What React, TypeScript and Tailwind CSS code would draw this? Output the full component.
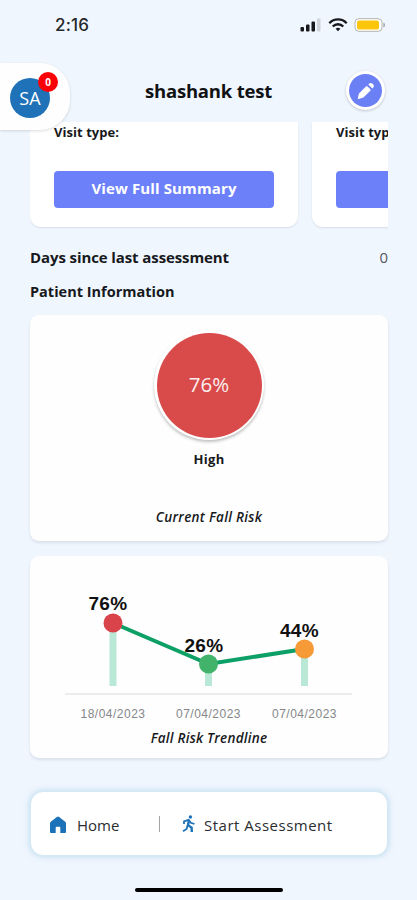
const points = [
  { date: "18/04/2023", label: "76%", x: 113, y: 623, lx: 108, ly: 610, color: "#d9434a" },
  { date: "07/04/2023", label: "26%", x: 208.5, y: 664, lx: 204, ly: 652, color: "#41b36b" },
  { date: "07/04/2023", label: "44%", x: 304.5, y: 649, lx: 299.5, ly: 636.5, color: "#f59a36" },
];

function StatusBar() {
  return (
    <div className="h-[50px] pt-[2px] pl-[55px] pr-[31px] flex items-center justify-between">
      <span className="font-['Inter'] font-medium text-[17px] tracking-[0.2px] text-[#25282c]">2:16</span>
      <div className="flex items-center -mt-[2px]">
        <svg width="22" height="14" viewBox="0 0 22 14" className="mr-[6px]">
          <rect x="0.5" y="9" width="3.5" height="4.5" rx="1" fill="#17191c" />
          <rect x="6" y="6.5" width="3.5" height="7" rx="1" fill="#17191c" />
          <rect x="11.5" y="3.5" width="3.5" height="10" rx="1" fill="#17191c" />
          <rect x="17" y="0.5" width="3.5" height="13" rx="1" fill="#cfd4da" />
        </svg>
        <svg width="20" height="14" viewBox="0 0 20 14" className="mr-[6px]" fill="none" stroke="#17191c" strokeWidth="2.3">
          <path d="M1.3 5.2C6.1 0.2 13.9 0.2 18.7 5.2" />
          <path d="M4.7 8.5C7.7 5.5 12.3 5.5 15.3 8.5" />
          <path d="M7.6 10.7C9 9.5 11 9.5 12.4 10.7L10 13.2Z" fill="#17191c" stroke="none" />
        </svg>
        <svg width="32" height="14" viewBox="0 0 32 14">
          <rect x="1" y="0.7" width="27" height="12.6" rx="3.8" fill="#fff" stroke="#b3b3ae" strokeWidth="1" />
          <rect x="3" y="2.4" width="22" height="9.2" rx="2.2" fill="#fdc50b" />
          <path d="M29.5 4.5C31.3 5.2 31.3 8.8 29.5 9.5Z" fill="#8f9296" />
        </svg>
      </div>
    </div>
  );
}

function Header() {
  return (
    <header className="relative h-[72px] flex items-center justify-center">
      <div className="absolute z-10 left-0 top-[13px] w-[70px] h-[67px] bg-[#fefefe] rounded-r-[30px] shadow-[0_1px_3px_rgba(0,0,0,0.14)]">
        <div className="absolute left-[10px] top-[15px] size-10 rounded-full bg-[#1f72b8] flex items-center justify-center text-white text-[18px]">
          SA
        </div>
        <div className="absolute left-[38px] top-[9px] size-5 rounded-full bg-[#fb0007] flex items-center justify-center text-white font-bold text-[10px]">
          0
        </div>
      </div>
      <h1 className="mt-[10px] font-bold text-[18.5px] tracking-[-0.2px] text-[#101214]">shashank test</h1>
      <button className="absolute left-[346px] top-[21px] size-[39px] rounded-full bg-white shadow-[0_1px_3px_rgba(0,0,0,0.2)] flex items-center justify-center">
        <span className="size-[33px] rounded-full bg-[#6c80f5] flex items-center justify-center">
          <svg width="20" height="20" viewBox="0 0 20 20" fill="#fff">
            <path d="M1.8 17L3 12.4L9.9 5.5Q10.8 4.8 11.6 5.5L14.3 8.2Q15 9 14.3 9.8L7.4 16.6L2.7 17.9Q1.6 18.1 1.8 17Z" />
            <path d="M12.3 3.6L13.3 2.6Q14.9 1.3 16.3 2.6L17.3 3.6Q18.6 5 17.3 6.6L16.3 7.6Z" />
          </svg>
        </span>
      </button>
    </header>
  );
}

function VisitCard({ action }: { action?: string }) {
  return (
    <div className="w-[268px] h-[105px] shrink-0 bg-white rounded-b-[11px] px-6 shadow-[0_1px_2px_rgba(0,0,0,0.1)]">
      <p className="h-[49px] pt-[1px] text-[13px] leading-[18px] tracking-[0.05px] font-bold">Visit type:</p>
      <button className="w-[220px] h-[37px] pb-[2px] rounded-[4px] bg-[#6c80fa] text-white font-bold text-[15px] tracking-[0.12px]">
        {action}
      </button>
    </div>
  );
}

function RiskCard() {
  return (
    <section className="mt-[11px] h-[226px] bg-[#fefefe] rounded-[9px] shadow-[0_2px_3px_rgba(60,70,90,0.12)] flex flex-col items-center pt-[15px]">
      <div className="size-[110px] rounded-full bg-white shadow-[0_2px_3px_rgba(0,0,0,0.24)] flex items-center justify-center">
        <div className="size-[105px] pb-[2px] rounded-full bg-[#d94b4b] text-[#fbeeee] text-[20.5px] flex items-center justify-center">
          76%
        </div>
      </div>
      <p className="mt-[9px] text-[13px] leading-[20px] tracking-[0.3px] font-bold">High</p>
      <p className="mt-[38px] text-[13.5px] leading-[20px] tracking-[0.3px] font-semibold italic">Current Fall Risk</p>
    </section>
  );
}

function TrendCard() {
  return (
    <section className="mt-[15px] h-[202px] bg-[#fefefe] rounded-[9px] shadow-[0_2px_3px_rgba(60,70,90,0.12)] flex flex-col items-center">
      <svg width="358" height="172" viewBox="30 556 358 172" className="font-['Liberation_Sans']">
        {points.map((p) => (
          <line key={p.x} x1={p.x} y1={p.y} x2={p.x} y2="686" stroke="#b9e8d7" strokeWidth="7" />
        ))}
        <path d="M113 623L208.5 664L304.5 649" fill="none" stroke="#0da066" strokeWidth="4" />
        <line x1="65" y1="694" x2="352" y2="694" stroke="#e6e7e9" strokeWidth="1.3" />
        {points.map((p) => (
          <g key={p.x} textAnchor="middle">
            <circle cx={p.x} cy={p.y} r="9.5" fill={p.color} />
            <text x={p.lx} y={p.ly} fontSize="19" letterSpacing="0.4" fontWeight="bold" fill="#111">{p.label}</text>
            <text x={p.x} y="718" fontSize="12" letterSpacing="0.5" fill="#85878a">{p.date}</text>
          </g>
        ))}
      </svg>
      <p className="text-[13.5px] leading-[20px] tracking-[0.25px] font-semibold italic">Fall Risk Trendline</p>
    </section>
  );
}

function BottomNav() {
  return (
    <nav className="mt-[33px] h-[65px] bg-white rounded-[13px] border border-[#d5e9f4] shadow-[0_0_6px_rgba(120,185,220,0.5)] flex items-center pl-[18px] pt-[4px] text-[15px] text-[#2b2d30]">
      <svg width="18" height="18" viewBox="0 0 18 18" fill="#1c72b8" className="-mt-px">
        <path d="M9 0.5Q9.6 0.5 10.2 1L16.2 5.8Q17 6.5 17 7.5V16Q17 17 16 17H11.3V11.5Q11.3 10.7 10.5 10.7H7.5Q6.7 10.7 6.7 11.5V17H2Q1 17 1 16V7.5Q1 6.5 1.8 5.8L7.8 1Q8.4 0.5 9 0.5Z" />
      </svg>
      <span className="ml-[10px] w-[82px]">Home</span>
      <span className="w-px h-4 -mt-1 bg-[#a2a4a7]" />
      <svg width="14" height="18" viewBox="0 0 14 18" className="ml-[22px] -mt-[3px]" fill="none" stroke="#1c72b8" strokeWidth="1.8">
        <circle cx="8.4" cy="2" r="1.7" fill="#1c72b8" stroke="none" />
        <path d="M2 9V6.4L6.6 4.8L8.8 7.8L12.5 9" />
        <path d="M7 5L6 10.2L9.6 12.6L9.8 17" strokeWidth="2.4" />
        <path d="M5.6 10.5L4.6 14L1 16.2" />
      </svg>
      <span className="ml-[8px] tracking-[0.5px]">Start Assessment</span>
    </nav>
  );
}

export default function App() {
  return (
    <div className="w-[417px] h-[900px] overflow-hidden bg-[#f0f6fe] font-['Open_Sans',sans-serif] text-[#17191c] flex flex-col">
      <StatusBar />
      <Header />
      <main className="pl-[30px] pr-[29px] flex flex-col">
        <div className="h-[109px] flex gap-[14px] overflow-hidden">
          <VisitCard action="View Full Summary" />
          <VisitCard />
        </div>
        <div className="mt-[9px] h-[34px] flex items-center justify-between text-[15px]">
          <span className="font-bold tracking-[-0.1px]">Days since last assessment</span>
          <span className="text-[#55585c]">0</span>
        </div>
        <h2 className="h-[30px] flex items-center pt-[5px] font-bold text-[14.5px]">Patient Information</h2>
        <RiskCard />
        <TrendCard />
        <BottomNav />
      </main>
      <div className="mt-[32px] mx-auto w-[148px] h-[4px] rounded-full bg-black" />
    </div>
  );
}
